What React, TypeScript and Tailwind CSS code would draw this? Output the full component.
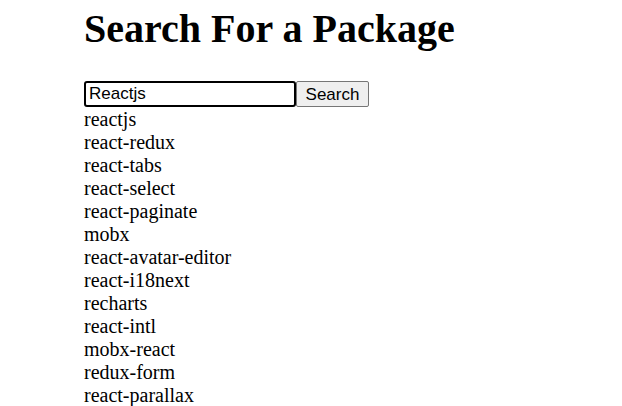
import React from "react";

const items = [
  "reactjs",
  "react-redux",
  "react-tabs",
  "react-select",
  "react-paginate",
  "mobx",
  "react-avatar-editor",
  "react-i18next",
  "recharts",
  "react-intl",
  "mobx-react",
  "redux-form",
  "react-parallax",
];

export default function App() {
  return (
    <div className="bg-white min-h-screen pl-[84px] text-black" style={{ fontFamily: '"Liberation Serif", serif' }}>
      <h1 className="font-bold text-[40px] leading-[46px] pt-[6px] m-0">Search For a Package</h1>
      <div className="flex items-center mt-[29px]">
        <input
          defaultValue="Reactjs"
          className="w-[212px] h-[26px] border-2 border-black rounded-[3px] px-[3px] text-[17px] outline-none"
          style={{ fontFamily: '"Liberation Sans", Arial, sans-serif' }}
        />
        <button
          className="h-[26px] w-[73px] border border-[#767676] rounded-[2px] bg-[#efefef] text-[17px] text-black"
          style={{ fontFamily: '"Liberation Sans", Arial, sans-serif' }}
        >
          Search
        </button>
      </div>
      <ul className="text-[20px] leading-[23px] pt-[1px]">
        {items.map((it) => (
          <li key={it}>{it}</li>
        ))}
      </ul>
    </div>
  );
}
